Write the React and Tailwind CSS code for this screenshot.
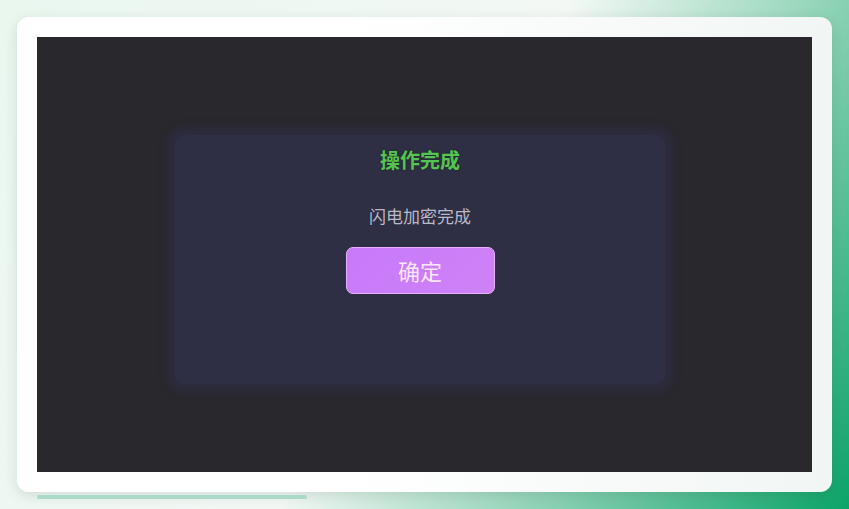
import React from "react";

const cjk = { fontFamily: '"Noto Sans CJK SC", "Noto Sans", sans-serif' };

export default function App() {
  return (
    <div
      className="relative w-[849px] h-[509px] overflow-hidden bg-[linear-gradient(120deg,#e9f7ef_0%,#f3f8f5_50%,#8fd3b6_73%,#0ba468_100%)] pt-[17px] pl-[17px]"
      style={cjk}
    >
      {/* white frame */}
      <div className="w-[815px] h-[475px] rounded-[12px] bg-[linear-gradient(90deg,#ffffff_40%,#f1f6f4_100%)] shadow-[0_4px_14px_rgba(0,40,20,0.12)] p-[20px]">
        <div className="w-[775px] h-[435px] bg-[#29282d] pl-[138px] pt-[98px]">
          {/* dialog */}
          <div className="w-[490px] h-[249px] rounded-[10px] bg-[#2e2e44] shadow-[0_0_8px_8px_#2d2c3e] flex flex-col items-center">
            <div className="mt-[14px] text-[20px] leading-[22px] font-bold text-[#58c255] [text-shadow:0_0_2px_#143014]">
              操作完成
            </div>
            <div className="mt-[35px] text-[17px] leading-[20px] text-[#bab9c7]">
              闪电加密完成
            </div>
            <button className="mt-[21px] w-[149px] h-[47px] rounded-[7px] border border-[#eab0ff] bg-[linear-gradient(135deg,#c779fa_0%,#cf82f6_100%)] flex items-center justify-center text-[22px] text-[#fbe6ff]">
              确定
            </button>
          </div>
        </div>
      </div>
      {/* progress strip */}
      <div className="ml-[20px] mt-[3px] w-[270px] h-[4px] rounded-full bg-[#abd9ca]" />
    </div>
  );
}
